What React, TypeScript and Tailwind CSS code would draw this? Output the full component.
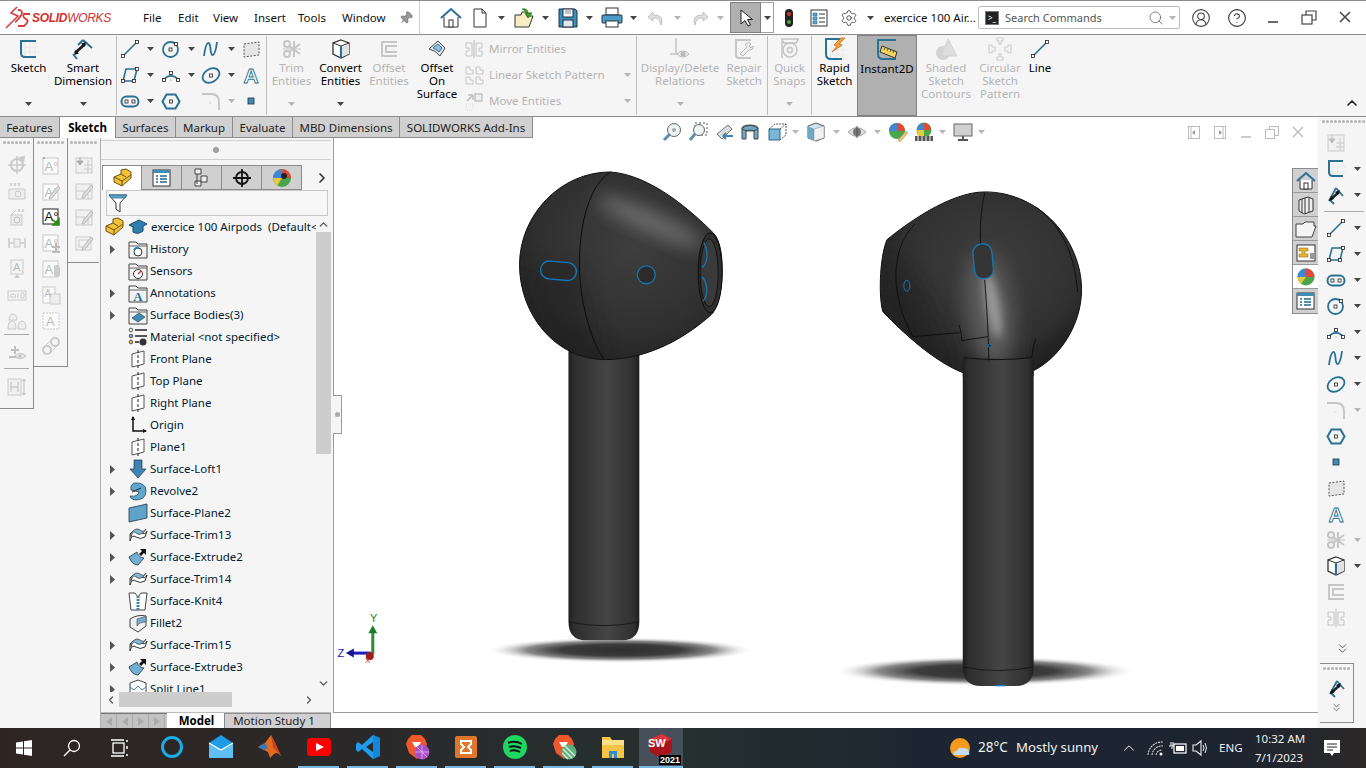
import React from "react";
import { Settings, Search, CircleUserRound, CircleHelp, ChevronRight, ChevronLeft, ChevronUp, ChevronDown, ChevronsDown, Pin } from "lucide-react";

type P = { children?: React.ReactNode; s?: number; v?: number };
const S = ({ children, s = 20, v = 20 }: P) => (
  <svg width={s} height={s} viewBox={`0 0 ${v} ${v}`} className="shrink-0 block">{children}</svg>
);
const B = "#2a7196";
const G = "#c6c6c6";
const H = ({ x, y }: { x: number; y: number }) => <rect x={x - 1.5} y={y - 1.5} width="3" height="3" fill="#fff" stroke="#222" strokeWidth=".8" />;

const Caret = ({ off }: { off?: boolean }) => (
  <svg width="7" height="4" viewBox="0 0 7 4" className="shrink-0 block"><path d="M0 0H7L3.5 4Z" fill={off ? "#b5b5b5" : "#444"} /></svg>
);

const LineI = () => <S><path d="M3 17L17 3" stroke={B} strokeWidth="1.6" /><H x={3} y={17} /><H x={17} y={3} /></S>;
const RectI = () => <S><path d="M6 4H17L14 16H3Z" fill="none" stroke={B} strokeWidth="1.6" /><H x={17} y={4} /><H x={3} y={16} /><H x={14} y={16} /></S>;
const SlotI = () => <S><rect x="1.5" y="5.5" width="17" height="10" rx="5" fill="none" stroke={B} strokeWidth="2" /><H x={6.5} y={10.5} /><H x={13.5} y={10.5} /></S>;
const CircI = () => <S><circle cx="9.5" cy="10.5" r="7.5" fill="none" stroke={B} strokeWidth="1.8" /><H x={9.5} y={10.5} /><H x={15} y={5} /></S>;
const ArcI = () => <S><path d="M3 15A8 8 0 0 1 17 15" fill="none" stroke={B} strokeWidth="1.7" /><H x={3} y={15} /><H x={17} y={15} /><H x={10} y={8} /><path d="M9 14l2 2m0-2l-2 2" stroke="#ccc" strokeWidth=".7" /></S>;
const SplI = () => <S><path d="M3 17C5 1 9 1 9.5 10S14 19 16 3" fill="none" stroke={B} strokeWidth="1.8" /></S>;
const EllI = () => <S><ellipse cx="10" cy="10.5" rx="9" ry="6.5" transform="rotate(-32 10 10.5)" fill="none" stroke={B} strokeWidth="1.8" /><H x={10} y={10.5} /></S>;
const FilI = () => <S><path d="M1 3H10Q18 3 18 11V19" fill="none" stroke="#c4c4c4" strokeWidth="1.8" /><path d="M8 11l2 2m0-2l-2 2" stroke="#ddd" strokeWidth=".7" /></S>;
const HexI = () => <S><path d="M5.5 3.5H14.5L18.5 10.5L14.5 17.5H5.5L1.5 10.5Z" fill="none" stroke={B} strokeWidth="2" /><H x={10} y={10.5} /></S>;
const PtI = () => <S><rect x="7" y="7" width="6" height="6" fill="#3f8db5" stroke="#234" strokeWidth=".8" /></S>;
const PlnI = () => <S><path d="M3 5L18 3V16L3 18Z" fill="#e5e5e5" stroke="#555" strokeDasharray="2 1.5" /></S>;
const TxtI = () => <S><text x="10" y="18" textAnchor="middle" fontFamily="Liberation Sans" fontSize="21" fontWeight="700" fill="#fff" stroke={B} strokeWidth=".9">A</text></S>;
const SkI = () => <S v={22} s={22}><g stroke="#e3e3e3" strokeWidth=".7"><path d="M7 1V20M12 1V20M17 1V20M3 9H21M3 14H21" /></g><path d="M18 3H3V15Q3 19 7 19H18" fill="none" stroke={B} strokeWidth="2" /></S>;
const DimI = () => <S v={22} s={22}><path d="M11 2L20 10" fill="none" stroke={B} strokeWidth="2" /><path d="M11 2L6 7" fill="none" stroke={B} strokeWidth="2" /><path d="M3 15L13 6" stroke="#222" strokeWidth="3" /><path d="M14 4l-5 1.5 3.5 3.5ZM2 17l5-1.5L3.500 12Z" fill="#111" /><path d="M5 21L1 16" stroke={B} strokeWidth="2" /></S>;
const TrimI = ({ c = G }: { c?: string }) => <S><circle cx="5" cy="5" r="3" fill="none" stroke={c} strokeWidth="2" /><circle cx="5" cy="15" r="3" fill="none" stroke={c} strokeWidth="2" /><path d="M7 7L18 15M7 13L18 5M12 2V18" stroke={c} strokeWidth="2" /><path d="M1 10H19" stroke={c} strokeWidth="1" /></S>;
const ConvI = () => <S><path d="M10 1L18 4V15L10 19L2 15V4Z" fill="#fff" stroke="#333" strokeWidth="1.3" /><path d="M2 4L10 7L18 4" fill="none" stroke="#333" /><path d="M10 7V19" stroke={B} strokeWidth="2.2" /><path d="M11 8L18 5V15L11 18Z" fill="#e2e2e2" /></S>;
const OffI = () => <S><path d="M18 3H3V17H18M18 7H7V13H18" fill="none" stroke="#c6c6c6" strokeWidth="2" /></S>;
const MirI = () => <S><path d="M10 1V19" stroke="#bbb" /><path d="M8 4H2V9H5V12H2V17H8ZM12 4H18V9H15V12H18V17H12Z" fill="none" stroke="#c4c4c4" /></S>;
const OnSI = () => <S><path d="M2 10L11 2L18 9L13 17Q8 11 2 10Z" fill="#dfe8ee" stroke="#444" /><path d="M6 9L11 5L15 9L12 13Q9 10 6 9Z" fill="#8fc0da" stroke={B} /></S>;
const PatI = () => <S><g fill="none" stroke="#c4c4c4"><path d="M2 2H6V5H9V9H2ZM12 2H16V5H19V9H12ZM2 12H6V15H9V19H2ZM12 12H16V15H19V19H12Z" /></g></S>;
const MovI = () => <S><path d="M3 10L9 4M9 4H4M9 4V9" stroke="#c0c0c0" strokeWidth="1.6" fill="none" /><rect x="11" y="3" width="7" height="7" fill="#eee" stroke="#c4c4c4" strokeWidth="1.5" /><path d="M2 13h7v6h-7z" fill="none" stroke="#ddd" strokeDasharray="1 1" /></S>;
const RelI = () => <S v={24} s={24}><path d="M8 1V17M2 17H14" stroke="#c4c4c4" strokeWidth="1.5" /><path d="M9 17Q15 11 21 17Q15 23 9 17Z" fill="#eee" stroke="#bbb" /><circle cx="15" cy="17" r="2.5" fill="#bbb" /></S>;
const RepI = () => <S v={22} s={22}><path d="M18 2H3V17Q3 20 6 20H18" fill="none" stroke="#c6c6c6" strokeWidth="2" /><path d="M7 16L14 9L12 6Q16 3 18 6L16 8L18 10L20 8Q21 12 16 12L10 18Z" fill="#eee" stroke="#bbb" /></S>;
const SnapI = () => <S v={24} s={24}><path d="M3 2H21M4 3L6 6H18L20 3M4 4V21" stroke="#c4c4c4" strokeWidth="1.5" fill="none" /><circle cx="12" cy="13" r="7" fill="none" stroke="#c4c4c4" strokeWidth="1.5" /><circle cx="12" cy="13" r="2.5" fill="none" stroke="#c4c4c4" strokeWidth="1.5" /></S>;
const RapI = () => <S v={24} s={24}><g stroke="#e6e6e6" strokeWidth=".7"><path d="M8 8V23M14 8V23M20 8V23M2 13H23M2 18H23" /></g><path d="M20 2H3V17Q3 22 8 22H19" fill="none" stroke={B} strokeWidth="2" /><path d="M18 1L11 8L14 9L9 15L19 8L16 7L22 1Z" fill="#f5a623" stroke="#c9561a" strokeWidth=".7" /></S>;
const InsI = () => <S v={24} s={24}><path d="M21 2H3V16Q3 21 8 21H21" fill="none" stroke={B} strokeWidth="2" /><path d="M7 8L22 14L20 20L5 14Z" fill="#f0d65a" stroke="#333" strokeWidth="1" /><path d="M10 10l-1 2M13 11l-1 2M16 12l-1 2M19 13l-1 2" stroke="#333" strokeWidth=".8" /></S>;
const ShaI = () => <S v={24} s={24}><circle cx="9" cy="16" r="7" fill="#d2d2d2" /><path d="M14 2L23 19H7Z" fill="#dedede" stroke="#d2d2d2" /></S>;
const CirPI = () => <S v={24} s={24}><g fill="none" stroke="#cfcfcf" strokeWidth="1.2"><path d="M9 1H15V4H13V7H11V4H9ZM9 23H15V20H13V17H11V20H9ZM1 8H4V10H7V14H4V16H1ZM23 8H20V10H17V14H20V16H23Z" /></g></S>;

const GripDots = ({ n = 7 }: { n?: number }) => (
  <div className="flex gap-px justify-center h-[3px]">{Array.from({ length: n }).map((_, i) => <span key={i} className="w-[3px] h-[3px] rounded-full bg-[#b4b4b4]" />)}</div>
);

const Big = ({ w, icon, label, off, caret, className = "" }: { w: string; icon: React.ReactNode; label: string[]; off?: boolean; caret?: boolean; className?: string }) => (
  <div className={`${w} flex flex-col items-center shrink-0 ${off ? "text-[#b4b4b4]" : "text-black"} ${className}`}>
    <div className="h-[26px] mt-[1px] flex items-center justify-center">{icon}</div>
    <div className="-mt-[1px] text-center leading-[13px] whitespace-nowrap">{label.map((l) => <div key={l}>{l}</div>)}</div>
    {caret && <div className="mt-auto mb-[10px]"><Caret off={off} /></div>}
  </div>
);
const Sep = () => <div className="w-px bg-[#bdbdbd] my-[1px] shrink-0" />;
const Cell = ({ icon, caret, off }: { icon: React.ReactNode; caret?: boolean; off?: boolean }) => (
  <div className="flex items-center h-[26px]">{icon}{caret && <div className="ml-[7px]"><Caret off={off} /></div>}</div>
);

const Ribbon = () => (
  <div className="h-[82px] flex bg-[#f5f5f5] border-b border-[#8c8c8c] shrink-0 relative">
    <div className="w-[5px] shrink-0" />
    <Big w="w-[47px]" icon={<SkI />} label={["Sketch"]} caret />
    <Big w="w-[62px]" icon={<DimI />} label={["Smart", "Dimension"]} caret />
    <div className="w-[2px]" />
    <Sep />
    <div className="ml-[3px] w-[146px] pt-[1px] grid grid-cols-[41px_40px_40px_24px] content-start">
      <Cell icon={<LineI />} caret /><Cell icon={<CircI />} caret /><Cell icon={<SplI />} caret /><Cell icon={<PlnI />} />
      <Cell icon={<RectI />} caret /><Cell icon={<ArcI />} caret /><Cell icon={<EllI />} caret /><Cell icon={<TxtI />} />
      <Cell icon={<SlotI />} caret /><Cell icon={<HexI />} /><Cell icon={<FilI />} caret off /><Cell icon={<PtI />} />
    </div>
    <Sep />
    <Big w="w-[49px]" icon={<TrimI />} label={["Trim", "Entities"]} off caret />
    <Big w="w-[49px]" icon={<ConvI />} label={["Convert", "Entities"]} caret />
    <Big w="w-[48px]" icon={<OffI />} label={["Offset", "Entities"]} off />
    <Big w="w-[48px]" icon={<OnSI />} label={["Offset", "On", "Surface"]} />
    <div className="w-[175px] pl-[3px] pt-[1px] shrink-0 text-[#b4b4b4]">
      {([[<MirI />, "Mirror Entities", false], [<PatI />, "Linear Sketch Pattern", true], [<MovI />, "Move Entities", true]] as [React.ReactNode, string, boolean][]).map(([ic, t, c], i) => (
        <div key={i} className="flex items-center h-[26px]">
          {ic}<span className="ml-[5px] whitespace-nowrap">{t}</span>
          {c && <div className="ml-auto mr-[5px]"><Caret off /></div>}
        </div>
      ))}
    </div>
    <Sep />
    <Big w="w-[86px]" icon={<RelI />} label={["Display/Delete", "Relations"]} off caret />
    <Big w="w-[42px]" icon={<RepI />} label={["Repair", "Sketch"]} off />
    <div className="w-[2px]" />
    <Sep />
    <Big w="w-[43px]" icon={<SnapI />} label={["Quick", "Snaps"]} off caret />
    <Sep />
    <Big w="w-[45px]" icon={<RapI />} label={["Rapid", "Sketch"]} />
    <Big w="w-[60px] bg-[#b0b0b0] border border-[#808080]" icon={<InsI />} label={["Instant2D"]} />
    <Big w="w-[58px]" icon={<ShaI />} label={["Shaded", "Sketch", "Contours"]} off />
    <Big w="w-[50px]" icon={<CirPI />} label={["Circular", "Sketch", "Pattern"]} off />
    <Big w="w-[30px]" icon={<LineI />} label={["Line"]} />
    <div className="ml-auto mr-[6px] mt-auto mb-[5px] text-[#222]"><ChevronUp size={16} strokeWidth={2.5} /></div>
  </div>
);

const Logo = () => (
  <div className="w-[143px] shrink-0 flex items-center pl-[5px]">
    <svg width="26" height="24" viewBox="0 0 26 24" className="shrink-0 block">
      <g fill="none" stroke="#d83a3a" strokeWidth="1.8">
        <path d="M12 1L6 7L13 10L1 22" strokeWidth="1.5" />
        <path d="M13 4H15Q19 6 15 11T10 16" />
        <path d="M25 8H19Q17 11 21 13T19 20H13" />
      </g>
    </svg>
    <span className="ml-[1px] text-[#d32f2f] italic text-[12px] tracking-tight whitespace-nowrap" style={{ fontFamily: "Liberation Sans" }}><b>SOLID</b>WORKS</span>
  </div>
);

const TB = ({ icon, off }: { icon: React.ReactNode; off?: boolean }) => (
  <div className="w-[44px] flex items-center shrink-0"><div className="w-[22px] flex justify-center">{icon}</div><div className="ml-[7px]"><Caret off={off} /></div></div>
);

const TitleBar = () => (
  <div className="h-[35px] flex items-center shrink-0 bg-white border-t border-b border-[#8c8c8c]">
    <Logo />
    {[["File", "w-[35px]"], ["Edit", "w-[35px]"], ["View", "w-[41px]"], ["Insert", "w-[44px]"], ["Tools", "w-[44px]"], ["Window", "w-[50px]"]].map(([t, w]) => (
      <span key={t} className={`${w} shrink-0 text-[#111]`}>{t}</span>
    ))}
    <div className="w-[27px] flex justify-center text-[#888]"><Pin size={14} fill="#999" className="rotate-45" /></div>
    <div className="w-px h-full bg-[#d0d0d0]" />
    <div className="ml-[20px] w-[22px] mr-[7px] shrink-0">
      <S v={22} s={22}><path d="M1 11L11 2L21 11" fill="none" stroke={B} strokeWidth="2" /><path d="M4 10V20H18V10" fill="#fff" stroke="#333" /><rect x="9" y="13" width="4" height="7" fill="#fff" stroke="#333" /></S>
    </div>
    <TB icon={<S><path d="M4 1H12L16 5V19H4Z" fill="#fff" stroke="#333" /><path d="M12 1V5H16" fill="none" stroke="#333" /></S>} />
    <TB icon={<S v={22} s={22}><path d="M2 8H8L9 5H14V9H20L16 20H2Z" fill="#f6eec2" stroke="#333" /><path d="M9 2Q15 1 15 7M12 6L15 11L19 6Z" fill="#3f9a28" stroke="#2d7a1c" /></S>} />
    <TB icon={<S v={22} s={22}><path d="M2 2H18L20 4V20H2Z" fill="#3c8fb8" stroke="#234" /><rect x="6" y="2" width="10" height="8" fill="#fff" stroke="#234" /><path d="M8 4H14M8 6H14" stroke="#888" /><rect x="6" y="13" width="10" height="7" fill="#dfeaf0" stroke="#234" /></S>} />
    <TB icon={<S v={22} s={22}><rect x="5" y="1" width="12" height="7" fill="#fff" stroke="#333" /><rect x="1" y="8" width="20" height="8" rx="1" fill="#4a9cc7" stroke="#234" /><rect x="5" y="14" width="12" height="6" fill="#fff" stroke="#333" /></S>} />
    <TB off icon={<S><path d="M7 4L2 9L7 13V10Q14 9 15 17Q19 7 7 7Z" fill="#e0e0e0" stroke="#c0c0c0" /></S>} />
    <div className="w-[41px] flex items-center shrink-0"><div className="w-[22px] flex justify-center"><S><path d="M13 4L18 9L13 13V10Q6 9 5 17Q1 7 13 7Z" fill="#e0e0e0" stroke="#c0c0c0" /></S></div><div className="ml-[6px]"><Caret off /></div></div>
    <div className="w-[31px] h-[31px] bg-[#b0b0b0] border border-[#808080] flex items-center justify-center shrink-0">
      <S><path d="M5 2V16L9 12.500L12 18L14.500 17L11.500 11.500H16.500Z" fill="#fff" stroke="#222" /></S>
    </div>
    <div className="w-[13px] h-[31px] bg-white border border-l-0 border-[#a0a0a0] flex items-center justify-center shrink-0"><Caret /></div>
    <div className="w-[20px] ml-[5px] flex justify-center shrink-0">
      <S><rect x="6" y="1" width="8" height="18" rx="4" fill="#222" /><circle cx="10" cy="6" r="2" fill="#d8362a" /><circle cx="10" cy="14" r="2" fill="#48a838" /></S>
    </div>
    <div className="w-[20px] ml-[10px] shrink-0"><S><rect x="2" y="2" width="16" height="16" fill="#fff" stroke="#333" /><path d="M4 5H8V8H4ZM4 9H8V12H4ZM4 13H8V16H4Z" fill="#5aa8d6" stroke="#26688f" strokeWidth=".6" /><path d="M10 6H16M10 10H16M10 14H16" stroke="#333" /></S></div>
    <div className="w-[20px] ml-[10px] flex justify-center shrink-0 text-[#444]"><Settings size={18} strokeWidth={1.2} /></div>
    <div className="ml-[8px]"><Caret /></div>
    <span className="ml-[10px] w-[94px] shrink-0 whitespace-nowrap text-[#111]">exercice 100 Air...</span>
    <div className="w-[202px] h-[23px] border border-[#bdbdbd] rounded-[2px] flex items-center shrink-0 bg-white">
      <div className="ml-[6px] w-[14px] h-[14px] bg-[#222] border border-[#777] text-white text-[8px] leading-[11px] pl-[2px]">&gt;_</div>
      <span className="ml-[6px] text-[11px] text-[#555]">Search Commands</span>
      <div className="ml-auto text-[#777]"><Search size={16} strokeWidth={1.4} /></div>
      <div className="ml-[5px] mr-[3px]"><Caret off /></div>
    </div>
    <div className="ml-[11px] w-[20px] text-[#444] shrink-0"><CircleUserRound size={20} strokeWidth={1.3} /></div>
    <div className="ml-[16px] w-[20px] text-[#333] shrink-0"><CircleHelp size={20} strokeWidth={1.3} /></div>
    <div className="ml-[16px] w-[20px] shrink-0"><S><path d="M5 14H15" stroke="#444" strokeWidth="1.6" /></S></div>
    <div className="ml-[16px] w-[20px] shrink-0"><S><rect x="3" y="7" width="10" height="9" fill="none" stroke="#444" strokeWidth="1.2" /><path d="M7 7V3H17V12H13" fill="none" stroke="#444" strokeWidth="1.2" /></S></div>
    <div className="ml-[16px] w-[20px] shrink-0"><S><path d="M5 4L15 14M15 4L5 14" stroke="#444" strokeWidth="1.5" /></S></div>
  </div>
);

const Tabs = () => {
  const items: [string, string][] = [["Features", "w-[60px]"], ["Sketch", "w-[56px]"], ["Surfaces", "w-[60px]"], ["Markup", "w-[57px]"], ["Evaluate", "w-[60px]"], ["MBD Dimensions", "w-[107px]"], ["SOLIDWORKS Add-Ins", "w-[133px]"]];
  return (
    <div className="flex h-[21px] shrink-0">
      {items.map(([t, w]) => (
        <div key={t} className={`${w} shrink-0 flex items-center justify-center pt-[1px] whitespace-nowrap border-r border-[#8c8c8c] ${t === "Sketch" ? "bg-white font-bold text-black" : "bg-[#d0d0d0] border-b text-[#222]"}`}>{t}</div>
      ))}
    </div>
  );
};

const HUD = () => (
  <div className="flex items-center self-start ml-[129px] h-[30px]">
    <S><circle cx="12" cy="8" r="6.500" fill="#eef3f6" stroke="#666" /><path d="M8 12L2 18" stroke="#5a90ad" strokeWidth="3" /><circle cx="12" cy="8" r="2" fill="#aaa" /></S>
    <div className="ml-[6px]"><S><rect x="7" y="1" width="12" height="12" fill="none" stroke="#555" strokeDasharray="2 2" /><circle cx="11" cy="8" r="5.500" fill="#eef3f6" stroke="#666" /><path d="M7 12L2 18" stroke="#5a90ad" strokeWidth="3" /></S></div>
    <div className="ml-[6px]"><S><path d="M3 12L14 3L18 7L8 17Z" fill="#ddd" stroke="#777" /><path d="M9 14H19M9 14L12 11M9 14L12 17" stroke="#3d86ad" strokeWidth="2" fill="none" /></S></div>
    <div className="ml-[6px]"><S><path d="M2 6Q10 1 18 6V17H14V9Q10 7 6 9V17H2Z" fill="#6fa9c7" stroke="#444" /><ellipse cx="10" cy="6" rx="8" ry="3" fill="none" stroke="#444" /></S></div>
    <div className="ml-[7px]"><S><path d="M2 7H13V18H2Z" fill="#7cb6d4" stroke="#26688f" /><path d="M2 7L8 2H19V13L13 18M13 7L19 2" fill="none" stroke="#555" strokeDasharray="2 1" /></S></div>
    <div className="ml-[5px]"><Caret off /></div>
    <div className="ml-[7px]"><S><path d="M10 1L18 4V16L10 19L2 16V4Z" fill="#cfe4ef" stroke="#555" /><path d="M2 4L8 7V19L2 16Z" fill="#6fa9c7" /><path d="M8 7L18 4V16L8 19Z" fill="#f2f2f2" stroke="#888" strokeWidth=".5" /></S></div>
    <div className="ml-[7px]"><Caret off /></div>
    <div className="ml-[7px]"><S><path d="M1 10Q10 1 19 10Q10 19 1 10Z" fill="#ddd" stroke="#aaa" /><circle cx="10" cy="10" r="4" fill="#777" /><path d="M10 4V16" stroke="#555" /></S></div>
    <div className="ml-[7px]"><Caret off /></div>
    <div className="ml-[7px]"><S><circle cx="9" cy="9" r="8" fill="#4aa64a" /><path d="M9 1A8 8 0 0 0 1 9H9Z" fill="#3f86d6" /><path d="M9 1A8 8 0 0 1 17 9H9Z" fill="#dd4a3a" /><path d="M10 18L18 9L20 11L12 20Z" fill="#eec56a" stroke="#888" strokeWidth=".5" /></S></div>
    <div className="ml-[6px]"><S><circle cx="10" cy="8" r="7.500" fill="#4aa64a" /><path d="M10 1A7 7 0 0 0 3 8H10Z" fill="#3f86d6" /><path d="M10 1A7 7 0 0 1 17 8H10Z" fill="#dd4a3a" /><path d="M3 8H10V14H4Z" fill="#e6c93c" /><rect x="1" y="14" width="18" height="5" fill="#555" /><path d="M4 14V19M8 14V19M12 14V19M16 14V19" stroke="#ddd" strokeWidth="1.200" /></S></div>
    <div className="ml-[5px]"><Caret off /></div>
    <div className="ml-[7px]"><S><rect x="1" y="2" width="18" height="12" fill="#d0d0d0" stroke="#666" /><path d="M10 14V17M5 18H15" stroke="#555" strokeWidth="2" /></S></div>
    <div className="ml-[5px]"><Caret off /></div>
  </div>
);

const WinBtns = () => (
  <div className="ml-auto self-start mr-[12px] flex items-center gap-[10px] h-[30px]">
    <S s={16} v={16}><rect x="2.500" y="2.500" width="11" height="12" fill="none" stroke="#bbb" /><path d="M5 2.500V14.500" stroke="#bbb" /><path d="M9 6V11L6 8.500Z" fill="#999" /></S>
    <S s={16} v={16}><rect x="2.500" y="2.500" width="11" height="12" fill="none" stroke="#bbb" /><path d="M11 2.500V14.500" stroke="#bbb" /><path d="M7 6V11L10 8.500Z" fill="#999" /></S>
    <S s={16} v={16}><path d="M3 13H13" stroke="#bbb" strokeWidth="1.500" /></S>
    <S s={16} v={16}><rect x="1.500" y="5.500" width="9" height="9" fill="none" stroke="#bbb" /><path d="M5.500 5.500V2.500H14.500V11.500H10.500" fill="none" stroke="#bbb" /></S>
    <S s={16} v={16}><path d="M3 3L13 13M13 3L3 13" stroke="#bbb" strokeWidth="1.300" /></S>
  </div>
);

const d = "#cacaca";
const Dial = () => <S><path d="M2 8H18V18H2Z" fill="#eee" stroke={d} /><circle cx="11" cy="13" r="3" fill="none" stroke={d} /><path d="M3 2l2 3m0-3l-2 3M7 2l2 3m0-3l-2 3M11 2l2 3m0-3l-2 3" stroke={d} /></S>;
const LA = ({ children }: { children?: React.ReactNode }) => <S><rect x="2" y="2" width="15" height="16" fill="#fafafa" stroke={d} /><text x="3.500" y="15" fontFamily="Liberation Sans" fontSize="13" fill="#bbb">A°</text>{children}</S>;
const Tbl = ({ children }: { children?: React.ReactNode }) => <S><rect x="2" y="3" width="16" height="15" fill="#f0f0f0" stroke={d} /><path d="M2 10H18M10 10V18M14 10V18" stroke={d} />{children}</S>;
const Pen = () => <path d="M9 14L17 4L19 6L11 16L8 17Z" fill="#ddd" stroke="#bbb" />;

const Col1 = [
  <S><circle cx="10" cy="10" r="6" fill="none" stroke={d} strokeWidth="2" /><path d="M1 10H19M10 1V19" stroke={d} strokeWidth="1.500" /><path d="M11 2L18 1L17 8Z" fill={d} /></S>,
  <Dial />,
  <S><rect x="4" y="8" width="11" height="10" fill="#eee" stroke={d} /><circle cx="10" cy="13" r="3" fill="none" stroke="#bbb" /><path d="M4 8L9 3M11 2l2 3m0-3l-2 3M15 2l2 3m0-3l-2 3" stroke={d} /></S>,
  <S><path d="M2 5V15M18 5V15M2 10H18" stroke={d} strokeWidth="1.500" /><rect x="7" y="6" width="6" height="8" fill="#eee" stroke={d} /></S>,
  <S><rect x="4" y="1" width="12" height="14" fill="#f4f4f4" stroke={d} /><text x="6" y="12" fontFamily="Liberation Sans" fontSize="11" fill="#bbb">A</text><path d="M7 19H13L10 15Z" fill={d} /></S>,
  <S><rect x="1" y="6" width="18" height="9" fill="none" stroke={d} /><path d="M3 12A3 3 0 0 1 9 12ZM11 8V13M14 8H17V13H14Z" fill="none" stroke={d} /></S>,
  <S><path d="M6 3Q10 3 10 9H2Q2 3 6 3ZM5 10Q9 10 9 18H1Q1 10 5 10ZM15 10Q19 10 19 18H11Q11 10 15 10Z" fill="#eee" stroke={d} /></S>,
];
const Col2 = [
  <LA><path d="M2 1l2 2m0-2l-2 2" stroke="#aaa" /></LA>,
  <LA><Pen /></LA>,
  <S><rect x="2" y="2" width="15" height="15" fill="#fff" stroke="#222" /><text x="3.500" y="14" fontFamily="Liberation Sans" fontSize="13" fill="#111">A°</text><path d="M11 12L17 18M18 12V18H12Z" fill="#2f8a12" stroke="#2f8a12" strokeWidth="1.500" /></S>,
  <LA><path d="M11 14H19M15 10V18M11 19H19" stroke="#bbb" strokeWidth="2" /></LA>,
  <LA><rect x="13" y="6" width="6" height="12" rx="3" fill="#ccc" /></LA>,
  <S><rect x="2" y="2" width="12" height="16" fill="#fafafa" stroke={d} /><rect x="9" y="9" width="10" height="10" fill="#eee" stroke={d} /><text x="3.500" y="12" fontFamily="Liberation Sans" fontSize="10" fill="#bbb">A</text></S>,
  <S><rect x="2" y="2" width="16" height="16" fill="#fafafa" stroke={d} strokeDasharray="2 1" /><text x="5" y="15" fontFamily="Liberation Sans" fontSize="13" fill="#bbb">A</text></S>,
  <S><circle cx="6" cy="14" r="4" fill="none" stroke={d} strokeWidth="2" /><circle cx="14" cy="6" r="4" fill="none" stroke={d} strokeWidth="2" /><path d="M3 11L11 3M9 17L17 9" stroke={d} /></S>,
];
const Col3 = [
  <S><rect x="2" y="3" width="16" height="15" fill="#f0f0f0" stroke={d} /><path d="M6 2V9M3 6L6 10L9 6Z" fill="#aaa" stroke="#aaa" /><path d="M10 10H18M10 14H18M14 5V18" stroke={d} /></S>,
  <Tbl><Pen /></Tbl>,
  <Tbl><Pen /></Tbl>,
  <S><rect x="2" y="4" width="15" height="13" fill="#f4f4f4" stroke={d} /><rect x="5" y="7" width="9" height="7" fill="none" stroke={d} /><Pen /></S>,
];

const LeftBars = () => (
  <div className="w-[100px] shrink-0 flex items-start bg-[#f5f5f5]">
    <div className="w-[34px] h-[271px] border-r border-b border-[#8c8c8c] flex flex-col items-center pt-[3px]">
      <GripDots />
      <div className="mt-[8px] flex flex-col items-center">
        {Col1.map((c, i) => <div key={i} className="h-[26px] flex items-center">{c}</div>)}
      </div>
      <div className="w-[25px] h-px bg-[#aaa]" />
      <div className="h-[33px] flex items-center"><S><path d="M4 8H12M8 4V12M2 15H10" stroke="#c0c0c0" strokeWidth="2" /><path d="M8 14Q13 9 19 14Q13 19 8 14Z" fill="#eee" stroke="#bbb" /><circle cx="13" cy="14" r="1.500" fill="#bbb" /></S></div>
      <div className="w-[25px] h-px bg-[#aaa]" />
      <div className="h-[35px] flex items-center"><S><rect x="1" y="2" width="13" height="16" fill="#f0f0f0" stroke={d} /><path d="M4 5V15M4 10H11M11 5V15M17 2V18M15 4L17 2L19 4M15 16L17 18L19 16" fill="none" stroke="#bbb" /></S></div>
    </div>
    <div className="w-[34px] h-[229px] border-r border-b border-[#8c8c8c] flex flex-col items-center pt-[3px]">
      <GripDots />
      <div className="mt-[9px] flex flex-col items-center">{Col2.map((c, i) => <div key={i} className="h-[25.800px] flex items-center">{c}</div>)}</div>
    </div>
    <div className="w-[31px] h-[125px] border-b border-[#8c8c8c] flex flex-col items-center pt-[3px]">
      <GripDots />
      <div className="mt-[8px] flex flex-col items-center">{Col3.map((c, i) => <div key={i} className="h-[26px] flex items-center">{c}</div>)}</div>
    </div>
  </div>
);

const Part = ({ s = 20 }: { s?: number }) => <S s={s}><path d="M2 9L9 6V2L14 1L19 4V10L10 18L2 14Z" fill="#f3c23a" stroke="#6b5210" /><path d="M2 9L10 13V18M10 13L19 7M9 6L14 9" fill="none" stroke="#6b5210" /></S>;
const Folder = ({ children }: { children?: React.ReactNode }) => <S><path d="M1 3H8L10 5H19V19H1Z" fill="#f2f2f2" stroke="#444" /><path d="M1 7H19" stroke="#666" />{children}</S>;
const Plane = () => <S><path d="M4 5L16 2V15L4 18Z" fill="#fff" stroke="#555" /><path d="M10 1V19" stroke="#222" strokeDasharray="3 2" /></S>;
const Trim = () => <S><path d="M2 9Q7 3 12 7T19 6L17 12Q12 15 8 12T2 16Z" fill="#fff" stroke="#333" /><path d="M3 8Q8 2 12 5T18 4L15 8Q11 11 8 8T3 12Z" fill="#7fb7d4" stroke="#333" strokeWidth=".7" /></S>;
const Extr = () => <S><path d="M1 10L9 5Q11 11 16 11L10 18Q4 18 1 10Z" fill="#6fb0d2" stroke="#234" strokeWidth=".8" /><path d="M12 2L18 2V8L16 6L13 9L11 7L14 4Z" fill="#111" /></S>;
type Row = { t: string; a?: boolean; i: React.ReactNode };
const rows: Row[] = [
  { t: "History", a: true, i: <Folder><circle cx="10" cy="13" r="4" fill="#fff" stroke="#333" /><path d="M6 11A4.500 4.500 0 0 1 11 9" stroke="#2a86b8" strokeWidth="2" fill="none" /></Folder> },
  { t: "Sensors", i: <Folder><circle cx="10" cy="13" r="4.500" fill="#fff" stroke="#333" /><path d="M10 13L13 10" stroke="#d33" strokeWidth="1.500" /></Folder> },
  { t: "Annotations", a: true, i: <Folder><text x="10" y="18" textAnchor="middle" fontFamily="Liberation Serif" fontWeight="700" fontSize="13" fill="#2a6f9e">A</text></Folder> },
  { t: "Surface Bodies(3)", a: true, i: <Folder><path d="M4 13L11 8L17 12L10 17Z" fill="#3f8db5" stroke="#234" strokeWidth=".6" /></Folder> },
  { t: "Material <not specified>", i: <S><circle cx="3" cy="3" r="1.800" fill="#fff" stroke="#555" /><circle cx="3" cy="9" r="1.800" fill="#6ab0dc" stroke="#555" /><circle cx="3" cy="15" r="1.800" fill="#eec22e" stroke="#555" /><path d="M7 3H19M7 9H19M7 15H11" stroke="#222" strokeWidth="1.500" /><circle cx="15" cy="15" r="3.500" fill="#333" /></S> },
  { t: "Front Plane", i: <Plane /> },
  { t: "Top Plane", i: <Plane /> },
  { t: "Right Plane", i: <Plane /> },
  { t: "Origin", i: <S><path d="M5 2V16H18" fill="none" stroke="#111" strokeWidth="1.500" /><path d="M3 5L5 1L7 5ZM15 14L19 16L15 18Z" fill="#111" /></S> },
  { t: "Plane1", i: <Plane /> },
  { t: "Surface-Loft1", a: true, i: <S><path d="M6 1H14V10H18L10 19L2 10H6Z" fill="#3f83b4" stroke="#234" strokeWidth=".7" /></S> },
  { t: "Revolve2", a: true, i: <S><path d="M6 2Q18 1 18 10T7 19Q2 18 2 15Q10 16 11 11L3 9Q2 4 6 2Z" fill="#5ea8cf" stroke="#234" strokeWidth=".7" /><path d="M4 11L13 7" stroke="#222" /></S> },
  { t: "Surface-Plane2", i: <S><path d="M1 5L19 1V15L1 19Z" fill="#5fa3c9" stroke="#234" strokeWidth=".8" /></S> },
  { t: "Surface-Trim13", a: true, i: <Trim /> },
  { t: "Surface-Extrude2", a: true, i: <Extr /> },
  { t: "Surface-Trim14", a: true, i: <Trim /> },
  { t: "Surface-Knit4", i: <S><path d="M1 2H7L10 6L13 2H19L17 19H3Z" fill="#fff" stroke="#444" /><path d="M10 5V19" stroke="#3a86ae" strokeWidth="3" strokeDasharray="2 1" /></S> },
  { t: "Fillet2", i: <S><path d="M2 6Q10 1 18 3V13L10 19L2 14Z" fill="#f0f0f0" stroke="#444" /><path d="M9 6Q16 4 18 3V9Q11 9 9 13Z" fill="#6fb0d2" stroke="#444" strokeWidth=".6" /></S> },
  { t: "Surface-Trim15", a: true, i: <Trim /> },
  { t: "Surface-Extrude3", a: true, i: <Extr /> },
  { t: "Split Line1", a: true, i: <S><path d="M2 4L10 1L18 4V16L10 19L2 16Z" fill="#fff" stroke="#444" /><path d="M2 8L6 11L10 7L14 11L18 8" fill="none" stroke="#3a86ae" /></S> },
];

const Arrow = () => <svg width="5" height="9" viewBox="0 0 5 9" className="block"><path d="M0 0L5 4.500L0 9Z" fill="#555" /></svg>;

const Tree = () => (
  <div className="w-[233px] shrink-0 bg-[#f5f5f5] border-l border-[#b0b0b0] flex flex-col relative">
    <div className="h-[20px] mt-[2px] border-t border-b border-[#d0d0d0] flex items-center justify-center shrink-0 mr-[2px]"><span className="w-[6px] h-[6px] rounded-full bg-[#aaa] border border-[#888]" /></div>
    <div className="h-[25px] mt-[5px] flex shrink-0">
      <div className="w-[40px] ml-px bg-white border border-b-0 border-[#8c8c8c] flex items-center justify-center"><Part /></div>
      {[
        <S><rect x="1" y="2" width="17" height="16" fill="#fff" stroke="#333" /><rect x="1" y="2" width="17" height="3" fill="#3f8db5" /><path d="M4 8H6M8 8H15M4 11H6M8 11H15M4 14H6M8 14H15" stroke="#26688f" strokeWidth="1.300" /></S>,
        <S><path d="M3 1H9V6H3ZM9 8H15V14H9ZM3 13H9V18H3ZM5 6V16" fill="#eee" stroke="#444" /></S>,
        <S><circle cx="10" cy="10" r="6" fill="none" stroke="#111" strokeWidth="1.800" /><path d="M10 1V19M1 10H19" stroke="#111" strokeWidth="1.800" /></S>,
        <S><circle cx="10" cy="10" r="9" fill="#4aa64a" /><path d="M10 1A9 9 0 0 0 1 10H10Z" fill="#3f86d6" /><path d="M10 1A9 9 0 0 1 19 10H10Z" fill="#dd4a3a" /><path d="M1 10H10L5 18Q2 15 1 10Z" fill="#e6c93c" /><circle cx="12" cy="8" r="3" fill="#222" /></S>,
      ].map((ic, i) => (
        <div key={i} className="w-[40px] bg-[#d0d0d0] border border-l-0 border-[#8c8c8c] flex items-center justify-center">{ic}</div>
      ))}
      <div className="ml-[12px] flex items-center text-[#333]"><ChevronRight size={16} strokeWidth={2.500} /></div>
    </div>
    <div className="h-[26px] mx-[5px] border border-[#c8c8c8] flex items-center pl-[1px] shrink-0 bg-[#f7f7f7]">
      <S><path d="M1 2H19L12 10V19L8 16V10Z" fill="#fff" stroke="#333" /><path d="M1 2H19L17 5H3Z" fill="#5ca3c9" stroke="#26688f" strokeWidth=".7" /></S>
    </div>
    <div className="h-[476px] flex shrink-0 overflow-hidden">
      <div className="w-[215px] shrink-0 overflow-hidden">
        <div className="h-[22px] flex items-center text-[#001a33] whitespace-nowrap overflow-hidden">
          <div className="ml-[3px]"><Part /></div>
          <div className="ml-[4px]"><S><path d="M1 8L11 3L19 7L10 12Z" fill="#2e7fae" stroke="#1b4b66" /><path d="M5 10V15Q10 18 15 14V9" fill="#2e7fae" stroke="#1b4b66" /></S></div>
          <span className="ml-[3px]">exercice 100 Airpods&nbsp; (Default&lt;</span>
        </div>
        {rows.map((r) => (
          <div key={r.t} className="h-[22px] flex items-center whitespace-nowrap text-[#001a33]">
            <div className="w-[27px] pl-[9px] shrink-0">{r.a && <Arrow />}</div>
            <div className="w-[22px] shrink-0">{r.i}</div>
            <span>{r.t}</span>
          </div>
        ))}
      </div>
      <div className="w-[15px] shrink-0 flex flex-col items-center text-[#555]">
        <div className="h-[16px] flex items-center"><ChevronUp size={13} strokeWidth={2.500} /></div>
        <div className="w-[15px] h-[222px] bg-[#cdcdcd]" />
        <div className="mt-auto h-[16px] mb-px flex items-center"><ChevronDown size={13} strokeWidth={2.500} /></div>
      </div>
    </div>
    <div className="h-[15px] ml-[1px] w-[230px] flex items-center shrink-0 bg-[#f5f5f5] text-[#555]">
      <div className="w-[17px] flex justify-center shrink-0"><ChevronLeft size={12} strokeWidth={2.500} /></div>
      <div className="w-[113px] h-full bg-[#cdcdcd] shrink-0" />
      <div className="ml-auto w-[47px] flex justify-center pl-[1px] shrink-0"><ChevronRight size={12} strokeWidth={2.500} /></div>
    </div>
    <div className="h-[6px] border-b border-[#bbb] shrink-0 mr-[2px]" />
    <div className="h-[15px] flex shrink-0 bg-white">
      <div className="w-[66px] bg-[#c8c8c8] flex border-t border-[#777] shrink-0">
        {[0, 1, 2, 3].map((i) => <div key={i} className="w-[16px] bg-[#c2c2c2] border-r border-[#aaa] flex items-center justify-center"><svg width="8" height="9" viewBox="0 0 8 9" className="block"><path d={i < 2 ? "M7 0V9L1 4.500Z" : "M1 0V9L7 4.500Z"} fill="#aaa" /></svg></div>)}
      </div>
      <div className="w-[57px] pl-[2px] font-bold text-center leading-[15px] shrink-0">Model</div>
      <div className="w-[107px] pr-[7px] bg-[#d0d0d0] border-l border-t border-r border-[#8c8c8c] text-center leading-[14px] whitespace-nowrap text-[#222] shrink-0">Motion Study 1</div>
    </div>
  </div>
);

const Model = () => (
  <svg viewBox="334 138 984 575" className="block w-full h-full">
    <defs>
      <linearGradient id="st" x1="0" x2="1" y1="0" y2="0">
        <stop offset="0" stopColor="#1e1e1e" /><stop offset=".08" stopColor="#2e2e2e" /><stop offset=".55" stopColor="#454545" /><stop offset=".92" stopColor="#303030" /><stop offset="1" stopColor="#1e1e1e" />
      </linearGradient>
      <radialGradient id="bl" cx=".55" cy=".4" r=".65">
        <stop offset="0" stopColor="#3e3e3e" /><stop offset=".7" stopColor="#303030" /><stop offset="1" stopColor="#222" />
      </radialGradient>
      <radialGradient id="sh">
        <stop offset="0" stopColor="#2e2e2e" /><stop offset=".45" stopColor="#3c3c3c" /><stop offset=".7" stopColor="#8a8a8a" /><stop offset="1" stopColor="#ffffff" stopOpacity="0" />
      </radialGradient>
      <filter id="b8" x="-60%" y="-60%" width="220%" height="220%"><feGaussianBlur stdDeviation="9" /></filter>
      <filter id="b4" x="-60%" y="-60%" width="220%" height="220%"><feGaussianBlur stdDeviation="4" /></filter>
      <clipPath id="c1"><path d="M610 172C560 172 519 215 519 265C519 315 555 360 605 360C650 360 690 335 713 313C720 300 722 285 722 270C722 255 720 240 713 233C690 210 650 175 610 172Z" /></clipPath>
      <clipPath id="c2"><path d="M985 192C1040 192 1082 240 1082 290C1082 325 1060 358 1034 371L963 373C935 362 905 335 883 312C879 300 879 260 887 240C905 225 950 192 985 192Z" /></clipPath>
    </defs>

    <ellipse cx="620" cy="651" rx="135" ry="13" fill="url(#sh)" />
    <ellipse cx="985" cy="672" rx="152" ry="15" fill="url(#sh)" />

    <path d="M568 345H639V622Q639 641 622 641H585Q568 641 568 622Z" fill="url(#st)" />
    <path d="M569 623Q603 630 638 623" fill="none" stroke="#111" strokeWidth=".8" />
    <path d="M610 172C560 172 519 215 519 265C519 315 555 360 605 360C650 360 690 335 713 313C720 300 722 285 722 270C722 255 720 240 713 233C690 210 650 175 610 172Z" fill="url(#bl)" stroke="#111" />
    <g clipPath="url(#c1)">
      <ellipse cx="650" cy="222" rx="58" ry="10" transform="rotate(24 650 222)" fill="#6e6e6e" filter="url(#b8)" />
      <path d="M519 265C519 315 555 360 605 360L579 265Z" fill="#1f1f1f" opacity=".35" filter="url(#b8)" />
    </g>
    <path d="M610 172C590 185 579 220 579 265C579 300 590 340 603 359" fill="none" stroke="#0c0c0c" />
    <rect x="540" y="262" width="36" height="18" rx="9" transform="rotate(5 558 271)" fill="#2a2a2a" stroke="#1279b8" strokeWidth="1.300" />
    <circle cx="646" cy="275" r="9" fill="#2b2b2b" stroke="#1279b8" strokeWidth="1.300" />
    <ellipse cx="710" cy="273" rx="12" ry="40" fill="#2e2e2e" stroke="#0c0c0c" />
    <ellipse cx="709" cy="273" rx="9" ry="34" fill="#3a3a3a" stroke="#111" />
    <path d="M704 243C708 252 708 262 702 268M702 277C708 285 708 295 703 301" fill="none" stroke="#1279b8" strokeWidth="1.300" />

    <path d="M963 350H1034V668Q1034 687 1016 687H981Q963 687 963 668Z" fill="url(#st)" />
    <path d="M964 668Q998 675 1033 668" fill="none" stroke="#111" strokeWidth=".8" />
    <path d="M996 686.500H1006" stroke="#1279b8" strokeWidth="1.500" />
    <path d="M985 192C1040 192 1082 240 1082 290C1082 325 1060 358 1034 371L963 373C935 362 905 335 883 312C879 300 879 260 887 240C905 225 950 192 985 192Z" fill="url(#bl)" stroke="#111" />
    <g clipPath="url(#c2)">
      <path d="M880 240Q940 290 960 375H880Z" fill="#1e1e1e" opacity=".45" filter="url(#b8)" />
      <path d="M1035 345Q1070 330 1082 300V375H1035Z" fill="#1e1e1e" opacity=".4" filter="url(#b4)" />
      <ellipse cx="990" cy="310" rx="24" ry="58" transform="rotate(-8 990 310)" fill="#5a5a5a" filter="url(#b8)" />
      <ellipse cx="993" cy="305" rx="7" ry="34" transform="rotate(-10 993 305)" fill="#9a9a9a" filter="url(#b4)" />
    </g>
    <path d="M963 359H1034V377H963Z" fill="url(#st)" />
    <g fill="none" stroke="#0c0c0c" strokeWidth=".9">
      <path d="M985 193C981 210 980 230 981 245M985 280C987 310 989 335 989 361" />
      <path d="M915 224C890 250 890 295 913 337L960 333M959 325C961 330 962 336 962 341L988 337" />
      <path d="M964 358Q998 362 1032 358M1036 339Q1033 348 1032 358" />
      <path d="M1036 207C1058 222 1075 250 1078 292" />
    </g>
    <rect x="974" y="244" width="19" height="35" rx="9" transform="rotate(-5 983 262)" fill="#353535" stroke="#1279b8" strokeWidth="1.300" />
    <ellipse cx="907" cy="286" rx="3" ry="5.500" fill="none" stroke="#1279b8" />
    <circle cx="990" cy="346" r="1.500" fill="#222" stroke="#1279b8" />

    <path d="M372 655V632" stroke="#2d8a36" strokeWidth="3" />
    <path d="M367.500 634L372 626L376.500 634Z" fill="#1f7a2a" />
    <path d="M370 654H352" stroke="#1c1cc0" strokeWidth="3" />
    <path d="M353 649.500L345 654L353 658.500Z" fill="#15158f" />
    <circle cx="369" cy="657" r="4" fill="#a01c1c" />
    <text x="373" y="623" textAnchor="middle" fontFamily="Liberation Sans" fontSize="11" fill="#1f7a2a">Y</text>
    <text x="340" y="658" textAnchor="middle" fontFamily="Liberation Sans" fontSize="11" fill="#1515c0">Z</text>
    <text x="367" y="664" textAnchor="middle" fontFamily="Liberation Sans" fontSize="8" fill="#c02020">X</text>
  </svg>
);

const PaneTabs = () => (
  <div className="absolute right-0 top-[30px] w-[26px] bg-[#d0d0d0] border border-r-0 border-[#8c8c8c] flex flex-col">
    {[
      <S><path d="M1 10L10 2L19 10" fill="none" stroke={B} strokeWidth="2" /><path d="M4 9V18H16V9" fill="#fff" stroke="#333" /><rect x="8" y="12" width="4" height="6" fill="#fff" stroke="#333" /></S>,
      <S><path d="M3 5L12 2L17 4V16L8 19L3 16Z" fill="#eee" stroke="#333" /><path d="M6 4V18M9 3V18M13 3V17" stroke="#333" /></S>,
      <S v={22} s={22}><path d="M1 6H8L10 4H19V8H21L17 19H1Z" fill="#f4f4f4" stroke="#444" /></S>,
      <S><rect x="1" y="2" width="18" height="16" fill="#fff" stroke="#333" /><path d="M3 5H12V8H9V11H12V14H3V11H6V8H3Z" fill="#e8b52e" stroke="#7a5f10" strokeWidth=".5" /><rect x="14" y="10" width="4" height="6" fill="#999" /></S>,
      <S><circle cx="10" cy="10" r="8.500" fill="#4aa64a" /><path d="M10 1.500A8.500 8.500 0 0 0 1.500 10H10Z" fill="#3f86d6" /><path d="M10 1.500A8.500 8.500 0 0 1 18.500 10H10Z" fill="#dd4a3a" /><path d="M1.500 10H10L5 17Q2 14 1.500 10Z" fill="#e6c93c" /></S>,
      <S><rect x="1" y="2" width="17" height="16" fill="#fff" stroke="#333" /><rect x="1" y="2" width="17" height="3" fill="#3f8db5" /><path d="M4 8H6M8 8H15M4 11H6M8 11H15M4 14H6M8 14H15" stroke="#26688f" strokeWidth="1.300" /></S>,
    ].map((ic, i) => (
      <div key={i} className={`h-[24px] flex items-center justify-center border-b last:border-b-0 border-[#9a9a9a] ${i === 4 ? "bg-white" : ""}`}>{ic}</div>
    ))}
  </div>
);

const RC = ({ icon, caret, off, h = "h-[26px]" }: { icon: React.ReactNode; caret?: boolean; off?: boolean; h?: string }) => (
  <div className={`flex items-center ${h} pl-[8px] shrink-0`}>
    {icon}{caret && <div className="ml-[8px]"><Caret off={off} /></div>}
  </div>
);

const RightBar = () => (
  <div className="w-[48px] shrink-0 bg-[#f5f5f5] flex flex-col">
    <div className="pt-[3px] ml-[2px]"><GripDots n={11} /></div>
    <div className="mt-[7px]"><RC icon={<S><rect x="2" y="2" width="16" height="16" fill="#f0f0f0" stroke={d} /><path d="M6 2V9M3 6L6 10L9 6Z" fill="#bbb" stroke="#bbb" /><path d="M10 10H18M10 14H18M14 5V18" stroke={d} /></S>} /></div>
    <RC icon={<S><g stroke="#e6e6e6" strokeWidth=".7"><path d="M7 1V19M12 1V19M17 1V19M2 8H20M2 13H20" /></g><path d="M17 2H3V13Q3 17 7 17H17" fill="none" stroke={B} strokeWidth="2" /></S>} caret />
    <RC icon={<S><path d="M3 16L10 3M10 3L17 11M3 14L8 19" fill="none" stroke={B} strokeWidth="1.800" /><path d="M4 15L13 7" stroke="#222" strokeWidth="2.500" /><path d="M14 5L9 7L12 10ZM3 16L8 14L5 11Z" fill="#111" /></S>} caret />
    <div className="h-px w-[40px] ml-[6px] bg-[#aaa] my-[3px]" />
    {[<LineI />, <RectI />, <SlotI />, <CircI />, <ArcI />, <SplI />, <EllI />].map((ic, i) => <RC key={i} icon={ic} caret />)}
    <RC icon={<FilI />} caret off />
    <RC icon={<HexI />} />
    <RC icon={<PtI />} />
    <RC icon={<PlnI />} />
    <RC icon={<TxtI />} />
    <RC icon={<TrimI />} caret off />
    <RC icon={<ConvI />} caret />
    <RC icon={<OffI />} />
    <RC icon={<MirI />} />
    <div className="h-[29px] mt-[3px] flex items-center justify-center text-[#555] shrink-0"><ChevronsDown size={15} strokeWidth={1.500} /></div>
    <div className="w-[34px] ml-[2px] h-[60px] border-t border-r border-b border-[#8c8c8c] flex flex-col items-center pt-[3px] shrink-0">
      <GripDots />
      <div className="mt-[8px]"><S><path d="M3 16L10 3M10 3L17 11M3 14L8 19" fill="none" stroke={B} strokeWidth="1.800" /><path d="M4 15L13 7" stroke="#222" strokeWidth="2.500" /><path d="M14 5L9 7L12 10ZM3 16L8 14L5 11Z" fill="#111" /></S></div>
      <div className="mt-[3px] text-[#555]"><ChevronsDown size={13} strokeWidth={1.500} /></div>
    </div>
  </div>
);

const Slot = ({ run, children }: { run?: boolean; children: React.ReactNode }) => (
  <div className={`w-[41px] mx-[4px] h-full flex items-center justify-center shrink-0 border-b-2 ${run ? "border-[#78b8e4]" : "border-transparent"}`}>{children}</div>
);
const Brave = ({ c }: { c: React.ReactNode }) => (
  <S v={26} s={26}><path d="M4 5L8 1H17L21 5L23 10L20 19L13 25L5 19L2 10Z" fill="#f0582c" /><path d="M8 8H17L14 13H11Z" fill="#fff" />{c}</S>
);

const Taskbar = () => (
  <div className="h-[40px] shrink-0 flex items-center bg-[linear-gradient(90deg,#2e2523_0%,#2a2a2b_30%,#25302f_50%,#1c2632_68%,#1c2430_90%,#2c2929_100%)] text-white relative">
    <div className="w-[48px] flex justify-center shrink-0"><S v={20} s={20}><path d="M2 4.500L9 3.500V9.500H2ZM10 3.300L18 2V9.500H10ZM2 10.500H9V16.500L2 15.500ZM10 10.500H18V18L10 16.700Z" fill="#fff" /></S></div>
    <div className="w-[48px] flex justify-center shrink-0"><S><circle cx="12" cy="8" r="5.500" fill="none" stroke="#fff" strokeWidth="1.300" /><path d="M8 12L2 18" stroke="#fff" strokeWidth="1.500" /></S></div>
    <div className="w-[48px] flex justify-center shrink-0"><S><rect x="3" y="5" width="11" height="10" fill="none" stroke="#fff" strokeWidth="1.300" /><path d="M1 2H14M1 18H14M17 2V4M17 8V11M17 16V18" stroke="#fff" strokeWidth="1.500" /></S></div>
    <div className="w-[3px] shrink-0" />
    <Slot><S v={24} s={24}><circle cx="12" cy="12" r="9.500" fill="none" stroke="#19aee8" strokeWidth="3" /></S></Slot>
    <Slot><S v={26} s={26}><path d="M1 9L13 1L25 9V24H1Z" fill="#1e9be8" /><path d="M1 9L13 16L25 9V24H1Z" fill="#5fc0f5" /><path d="M1 9L13 16L25 9" fill="none" stroke="#fff" strokeWidth="1.200" /></S></Slot>
    <Slot><S v={26} s={26}><path d="M1 13L8 9L14 1Q18 8 24 22Q20 17 17 20L13 24L11 18L7 16Z" fill="#e26a1f" /><path d="M1 13L8 9L11 14L7 16Z" fill="#3a79b8" /><path d="M14 1Q18 8 24 22L16 13Z" fill="#c9411e" /></S></Slot>
    <Slot run><S v={26} s={26}><rect x="1" y="4" width="24" height="18" rx="4" fill="#f00" /><path d="M10 9L18 13L10 17Z" fill="#fff" /></S></Slot>
    <Slot run><S v={26} s={26}><path d="M18 1L25 4V22L18 25L7 15L3 18L1 16V10L3 8L7 11ZM18 8L11 13L18 18Z" fill="#1f9cf0" fillRule="evenodd" /><path d="M18 1L25 4V22L18 25Z" fill="#0e7fd0" opacity=".7" /></S></Slot>
    <Slot run><Brave c={<g><circle cx="18" cy="18" r="7.500" fill="#a84cc7" /><path d="M11 18H25M18 11V25M13 13L23 23" stroke="#e9c9f2" strokeWidth=".7" /></g>} /></Slot>
    <Slot run><S v={26} s={26}><rect x="2" y="2" width="22" height="22" rx="2" fill="#e0752c" /><path d="M8 7H18V10L15 13L18 16V19H8V16L11 13L8 10Z" fill="none" stroke="#fff" strokeWidth="2" /></S></Slot>
    <Slot run><S v={26} s={26}><circle cx="13" cy="13" r="12" fill="#1ed760" /><path d="M6 9Q13 6 20 10M7 13Q13 11 19 14M8 17Q13 15 18 18" fill="none" stroke="#111" strokeWidth="2" /></S></Slot>
    <Slot run><Brave c={<g><circle cx="18" cy="18" r="7.500" fill="#5ab27a" /><path d="M12 15L21 24M14 12L24 22M11 19L17 25" stroke="#e8f5ea" strokeWidth="1.200" /></g>} /></Slot>
    <Slot run><S v={26} s={26}><path d="M2 3H10L12 6H24V24H2Z" fill="#f5c445" /><rect x="2" y="6" width="22" height="5" fill="#fbe08a" /><path d="M9 17H17V24H14V20H12V24H9Z" fill="#2a8fd4" /></S></Slot>
    <div className="ml-[2px] w-[44px] h-full bg-[#46505a] border-b-2 border-[#78b8e4] flex items-center justify-center shrink-0 relative">
      <S v={28} s={28}><path d="M3 6L15 1L25 6V19L14 25L3 19Z" fill="#a8141a" /><path d="M15 1L25 6L14 11L3 6Z" fill="#d8343b" /></S>
      <span className="absolute left-[9px] top-[10px] text-[11px] font-bold leading-[11px]" style={{ fontFamily: "Liberation Sans" }}>SW</span>
      <span className="absolute right-[2px] bottom-[1px] bg-black px-px text-[9px] font-bold leading-[10px]" style={{ fontFamily: "Liberation Sans" }}>2021</span>
    </div>
    <div className="ml-[266px] w-[22px] shrink-0">
      <S v={22} s={22}><circle cx="11" cy="11" r="10" fill="#f59a1c" /><path d="M5 18Q3 14 8 14Q9 10 14 11Q20 11 20 15Q21 18 19 18Z" fill="#c4dcf2" /></S>
    </div>
    <span className="ml-[7px] w-[38px] shrink-0 text-[13.500px] text-[#f0f0f0]">28°C</span>
    <span className="text-[13.200px] w-[106px] shrink-0 whitespace-nowrap text-[#f0f0f0]">Mostly sunny</span>
    <div className="w-[20px] -ml-[2px] shrink-0 text-[#eee]"><ChevronUp size={18} strokeWidth={1.300} /></div>
    <div className="ml-[6px] w-[20px] shrink-0"><S><path d="M2 17A14 14 0 0 1 17 4M6 17A10 10 0 0 1 17 8M10 17A6 6 0 0 1 16 12" fill="none" stroke="#ddd" strokeWidth="1.100" strokeDasharray="2 .8" /><circle cx="15" cy="16" r="1.500" fill="#fff" /></S></div>
    <div className="ml-[2px] w-[22px] shrink-0"><S><rect x="6" y="6" width="12" height="9" fill="none" stroke="#fff" strokeWidth="1.200" /><rect x="8" y="8" width="8" height="5" fill="#fff" /><path d="M1 8H6M3 4V8M5 4V8M3 10H5" stroke="#fff" /></S></div>
    <div className="w-[20px] shrink-0"><S><path d="M3 7H6L11 3V17L6 13H3Z" fill="none" stroke="#eee" strokeWidth="1.100" /><path d="M13 7Q15 10 13 13M15 5Q18 10 15 15" fill="none" stroke="#eee" /></S></div>
    <span className="ml-[9px] w-[23px] shrink-0 text-[#eee] whitespace-nowrap">ENG</span>
    <div className="ml-[13px] w-[48px] shrink-0 text-center leading-[19px] text-[#eee] whitespace-nowrap"><div>10:32 AM</div><div>7/1/2023</div></div>
    <div className="ml-[20px] w-[16px] shrink-0"><S s={18} v={18}><path d="M1 1H17V14H11L9 17L7 14H1Z" fill="#fff" /><path d="M4 5H14M4 8H14M4 11H10" stroke="#222" /></S></div>
  </div>
);

export default function App() {
  return (
    <div className="w-[1366px] h-[768px] overflow-hidden flex flex-col bg-white text-[11.500px] leading-none" style={{ fontFamily: "'Noto Sans', sans-serif" }}>
      <TitleBar />
      <Ribbon />
      <div className="flex h-[611px] shrink-0">
        <div className="flex-1 flex flex-col min-w-0">
          <div className="flex h-[21px] shrink-0 items-center relative z-10">
            <Tabs />
            <HUD />
            <WinBtns />
          </div>
          <div className="flex flex-1 min-h-0">
            <LeftBars />
            <Tree />
            <div className="flex-1 flex flex-col min-w-0">
              <div className="h-[575px] border-l border-b border-[#9a9a9a] bg-white relative shrink-0">
                <Model />
                <PaneTabs />
                <div className="absolute -left-px top-[257px] w-[9px] h-[39px] bg-[#f5f5f5] border border-l-0 border-[#9a9a9a] flex items-center justify-center"><span className="w-[5px] h-[5px] rounded-full bg-[#aaa]" /></div>
              </div>
              <div className="flex-1 bg-white" />
            </div>
          </div>
        </div>
        <RightBar />
      </div>
      <Taskbar />
    </div>
  );
}
